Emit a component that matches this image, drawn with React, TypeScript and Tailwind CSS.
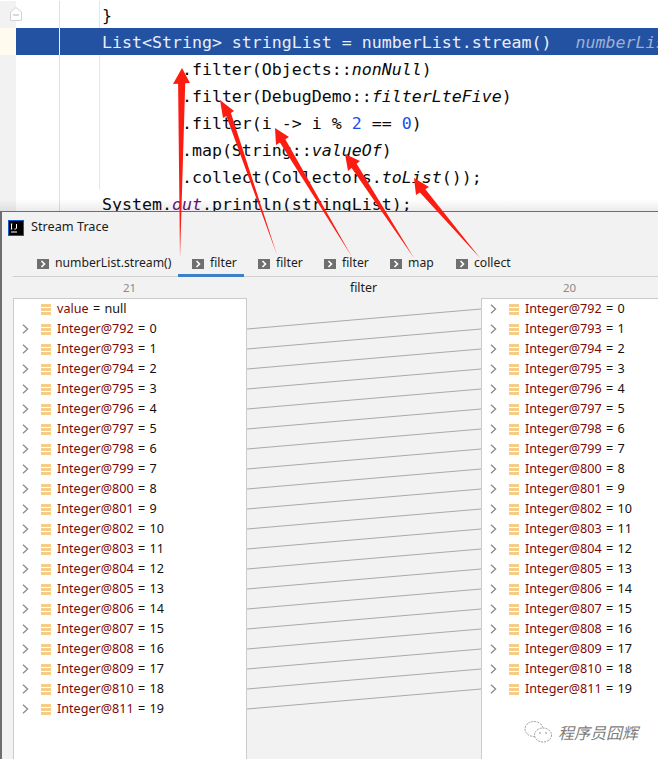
import React from "react";

const mono = "font-['DejaVu_Sans_Mono',monospace] text-[16.6px] leading-[27px] whitespace-pre";
const ui = "font-['Noto_Sans',sans-serif]";

function CodeRow({ children, guide, active, fold }: { children?: React.ReactNode; guide?: boolean; active?: boolean; fold?: boolean }) {
  return (
    <div className="relative flex h-[27px] shrink-0">
      <div className={active ? "w-4 bg-[#fffbee]" : "w-4 bg-[#f2f2f2]"} />
      {fold && (
        <svg className="absolute left-[10px] top-[6px]" width="12" height="14" viewBox="0 0 12 14" fill="#fff" stroke="#d2d2d2">
          <path d="M.5 13.5V5L6 .5 11.5 5v8.500z" />
          <path d="M3 8h6" stroke="#b5b5b5" />
        </svg>
      )}
      <div className={`flex flex-1 min-w-0 overflow-hidden ${active ? "bg-[#2352a3] text-[#e9eef7]" : "bg-white text-[#0a0a0a]"}`}>
        <div className={`w-[44px] shrink-0 border-r ${active ? "border-[#f0f0f0]" : "border-[#e0e0e0]"}`} />
        <div className="w-[39px] shrink-0" />
        <div className={`w-px shrink-0 ${guide ? "bg-[#e6e6e6]" : ""}`} />
        <div className={`${mono} pl-[2px] pt-px`}>{children}</div>
      </div>
    </div>
  );
}

const I = ({ children }: { children: React.ReactNode }) => <span className="italic">{children}</span>;
const N = ({ children }: { children: React.ReactNode }) => <span className="text-[#1750eb]">{children}</span>;

function Chevron() {
  return (
    <svg width="7" height="10" viewBox="0 0 7 10" fill="none" stroke="#8a8a8a" strokeWidth="1.3">
      <path d="M1 .8 5.600 5 1 9.200" />
    </svg>
  );
}

function Stripes() {
  return (
    <svg width="10" height="11" viewBox="0 0 10 11" fill="#f6cd88">
      <rect y="0" width="10" height="3" />
      <rect y="4" width="10" height="3" />
      <rect y="8" width="10" height="3" />
    </svg>
  );
}

function TreeRow({ name, value, arrow = true }: { name: string; value: string; arrow?: boolean }) {
  return (
    <div className={`${ui} flex h-5 items-center text-[12.6px] whitespace-nowrap`}>
      <div className="ml-[8px] flex w-[7px] justify-center">{arrow && <Chevron />}</div>
      <div className="ml-[12px]"><Stripes /></div>
      <div className="ml-[6px] [word-spacing:1px]">
        <span className="text-[#7c0a0a]">{name}</span>
        <span className="text-[#111]"> = {value}</span>
      </div>
    </div>
  );
}

function Tab({ label, active, width }: { label: string; active?: boolean; width: string }) {
  return (
    <div className={`${ui} -mb-px flex h-[24px] shrink-0 items-center pb-[3px] pl-[14px] text-[12.2px] text-[#1c1c1c] ${width} ${active ? "shadow-[inset_0_-3px_0_#3d7fc9]" : ""} whitespace-nowrap`}>
      <svg width="12" height="10" viewBox="0 0 12 10" className="mr-[6px] shrink-0">
        <rect width="12" height="10" fill="#6f6f6f" />
        <path d="M4.500 2 7.500 5 4.500 8" fill="none" stroke="#fff" strokeWidth="1.600" />
      </svg>
      {label}
    </div>
  );
}

const rows = Array.from({ length: 20 }, (_, i) => ({ name: `Integer@${792 + i}`, value: String(i) }));

function Arrow({ tip, l, r, tail }: { tip: number[]; l: number[]; r: number[]; tail: number[] }) {
  const nl = [l[0] + (r[0] - l[0]) * 0.3, l[1] + (r[1] - l[1]) * 0.3];
  const nr = [l[0] + (r[0] - l[0]) * 0.72, l[1] + (r[1] - l[1]) * 0.72];
  return (
    <polygon
      fill="#fb1d12"
      points={[tip, r, nr, tail, nl, l].map((p) => p.join(",")).join(" ")}
    />
  );
}

export default function App() {
  return (
    <div className="relative flex h-[759px] w-[658px] flex-col overflow-hidden bg-white">
      <div className="relative flex h-[211px] shrink-0 flex-col overflow-hidden">
        <div className="h-px shrink-0 bg-white" />
        <CodeRow guide fold>{"}"}</CodeRow>
        <CodeRow active>
          {"List<String> stringList = numberList.stream()  "}
          <span className="ml-[4px] italic text-[#9fb1d2]">numberList</span>
        </CodeRow>
        <CodeRow guide>{"        .filter(Objects::"}<I>nonNull</I>{")"}</CodeRow>
        <CodeRow guide>{"        .filter(DebugDemo::"}<I>filterLteFive</I>{")"}</CodeRow>
        <CodeRow guide>{"        .filter(i -> i % "}<N>2</N>{" == "}<N>0</N>{")"}</CodeRow>
        <CodeRow guide>{"        .map(String::"}<I>valueOf</I>{")"}</CodeRow>
        <CodeRow guide>{"        .collect(Collectors."}<I>toList</I>{"());"}</CodeRow>
        <CodeRow>
          {"System."}
          <span className="italic text-[#660e7a]">out</span>
          {".println(stringList);"}
        </CodeRow>
        <div className="absolute inset-x-0 bottom-0 h-[12px] bg-gradient-to-b from-transparent to-[#00000014]" />
      </div>

      <div className="flex min-h-0 flex-1 flex-col border-l-2 border-t border-[#6e6e6e] bg-[#f2f2f2]">
        <div className="flex h-[31px] shrink-0 items-center pl-[6px]">
          <svg width="16" height="16" viewBox="0 0 16 16">
            <rect width="16" height="16" fill="#0b5fc4" />
            <rect x="1" y="1" width="14" height="14" fill="#000" />
            <rect x="3" y="11.500" width="6" height="1" fill="#fff" />
            <path d="M3.500 4v5M2.800 4h1.500M2.800 9h1.500M8.500 4v4q0 1-1.200 1h-.8" stroke="#fff" strokeWidth="1" fill="none" />
          </svg>
          <span className={`${ui} ml-[7px] pb-[2px] text-[12.7px] text-[#1c1c1c]`}>Stream Trace</span>
        </div>
        <div className="ml-[11px] mt-[10px] flex h-[24px] shrink-0 border-b border-[#d0d0d0] pl-[10px]">
          <Tab label="numberList.stream()" width="w-[155px]" />
          <Tab label="filter" active width="w-[66px]" />
          <Tab label="filter" width="w-[66px]" />
          <Tab label="filter" width="w-[66px]" />
          <Tab label="map" width="w-[66px]" />
          <Tab label="collect" width="w-[66px]" />
        </div>
        <div className={`${ui} flex h-[21px] shrink-0 items-center text-[12.4px]`}>
          <div className="ml-[11px] w-[233px] text-center text-[11.5px] text-[#8a8a8a]">21</div>
          <div className="w-[235px] pt-px text-center text-[#1c1c1c]">filter</div>
          <div className="flex-1 text-center text-[11.5px] text-[#8a8a8a]">20</div>
        </div>
        <div className="flex min-h-0 flex-1 items-stretch">
          <div className="ml-[11px] w-[234px] shrink-0 border-x border-t border-[#cbcbcb] bg-white">
            <TreeRow name="value" value="null" arrow={false} />
            {rows.map((r) => <TreeRow key={r.name} name={r.name} value={r.value} />)}
          </div>
          <svg className="w-[234px] shrink-0" height="461" viewBox="0 0 234 461" fill="none" stroke="#a9a9a9">
            {rows.map((_, i) => (
              <line key={i} x1="0" y1={31 + i * 20} x2="234" y2={11 + i * 20} />
            ))}
          </svg>
          <div className="flex-1 border-l border-t border-[#cbcbcb] bg-white">
            {rows.map((r) => <TreeRow key={r.name} name={r.name} value={r.value} />)}
          </div>
        </div>
      </div>

      <svg className="pointer-events-none absolute left-0 top-0" width="658" height="300">
        <Arrow tip={[182, 68]} l={[173, 84]} r={[190, 83]} tail={[180, 258]} />
        <Arrow tip={[220, 100]} l={[223, 118]} r={[234, 111]} tail={[277, 255]} />
        <Arrow tip={[275, 128]} l={[276, 145]} r={[289, 137]} tail={[352, 257]} />
        <Arrow tip={[345, 154]} l={[348, 171]} r={[360, 161]} tail={[414, 258]} />
        <Arrow tip={[414, 178]} l={[416, 195]} r={[429, 187]} tail={[480, 258]} />
      </svg>

      <div className="absolute left-[524px] top-[720px] flex items-center gap-[4px]">
        <svg width="30" height="22" viewBox="0 0 30 22" fill="#fff" stroke="#9a9a9a" strokeWidth="1" strokeDasharray="2 1">
          <ellipse cx="10" cy="8" rx="9" ry="7.500" />
          <ellipse cx="19" cy="14" rx="8.500" ry="7" />
          <circle cx="16" cy="12" r=".8" fill="#888" stroke="none" />
          <circle cx="22" cy="12" r=".8" fill="#888" stroke="none" />
        </svg>
        <span className="font-['Noto_Sans_CJK_SC',sans-serif] text-[16px] italic text-[#7d7d7d]">程序员囧辉</span>
      </div>
    </div>
  );
}
